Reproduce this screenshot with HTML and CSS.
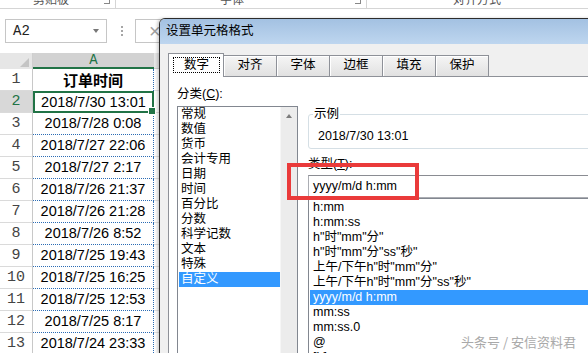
FILE: index.html
```html
<!doctype html>
<html>
    <head>
        <meta charset="utf-8">
        <title>设置单元格格式</title>
        <link rel="stylesheet" href="styles.css">
    </head>
    <body>
        <div class="ribbon">
            <div class="group group-clip"><span class="group-label">剪贴板</span><span class="launcher"></span></div>
            <div class="group group-font"><span class="group-label">字体</span><span class="launcher"></span></div>
            <div class="group group-align"><span class="group-label">对齐方式</span></div>
        </div>

        <div class="formula-bar">
            <div class="name-box"><span>A2</span><span class="drop"></span></div>
            <div class="grip"><i></i><i></i><i></i></div>
            <div class="formula-box"><span class="cancel">&times;</span></div>
        </div>

        <div class="sheet">
            <div class="corner"><span class="select-all"></span></div>
            <div class="col-head sel">A</div>
            <div class="col-head"></div>

            <div class="rh">1</div><div class="c head">订单时间</div><div class="b"></div>
            <div class="rh sel">2</div><div class="c active">2018/7/30 13:01</div><div class="b"></div>
            <div class="rh">3</div><div class="c">2018/7/28 0:08</div><div class="b"></div>
            <div class="rh">4</div><div class="c">2018/7/27 22:06</div><div class="b"></div>
            <div class="rh">5</div><div class="c">2018/7/27 2:17</div><div class="b"></div>
            <div class="rh">6</div><div class="c">2018/7/26 21:37</div><div class="b"></div>
            <div class="rh">7</div><div class="c">2018/7/26 21:28</div><div class="b"></div>
            <div class="rh">8</div><div class="c">2018/7/26 8:52</div><div class="b"></div>
            <div class="rh">9</div><div class="c">2018/7/25 19:43</div><div class="b"></div>
            <div class="rh">10</div><div class="c">2018/7/25 16:25</div><div class="b"></div>
            <div class="rh">11</div><div class="c">2018/7/25 12:53</div><div class="b"></div>
            <div class="rh">12</div><div class="c">2018/7/25 8:17</div><div class="b"></div>
            <div class="rh">13</div><div class="c">2018/7/24 23:33</div><div class="b"></div>
        </div>

        <div class="dialog">
            <div class="dialog-title">设置单元格格式</div>
            <div class="dialog-body">
                <div class="tabs">
                    <div class="tab active"><span class="focus">数字</span></div>
                    <div class="tab">对齐</div>
                    <div class="tab">字体</div>
                    <div class="tab">边框</div>
                    <div class="tab">填充</div>
                    <div class="tab">保护</div>
                </div>
                <div class="panel">
                    <div class="cat-col">
                        <div class="label">分类(<u>C</u>):</div>
                        <div class="listbox">
                            <div class="items">
                                <div class="item">常规</div>
                                <div class="item">数值</div>
                                <div class="item">货币</div>
                                <div class="item">会计专用</div>
                                <div class="item">日期</div>
                                <div class="item">时间</div>
                                <div class="item">百分比</div>
                                <div class="item">分数</div>
                                <div class="item">科学记数</div>
                                <div class="item">文本</div>
                                <div class="item">特殊</div>
                                <div class="item sel">自定义</div>
                            </div>
                            <div class="scrollbar"><span class="arrow-up"></span></div>
                        </div>
                    </div>
                    <div class="fmt-col">
                        <fieldset class="sample">
                            <legend>示例</legend>
                            <div class="sample-text">2018/7/30 13:01</div>
                        </fieldset>
                        <div class="label type-label">类型(<u>T</u>):</div>
                        <div class="type-input">yyyy/m/d h:mm</div>
                        <div class="type-list">
                            <div class="item">h:mm</div>
                            <div class="item">h:mm:ss</div>
                            <div class="item">h"时"mm"分"</div>
                            <div class="item">h"时"mm"分"ss"秒"</div>
                            <div class="item">上午/下午h"时"mm"分"</div>
                            <div class="item">上午/下午h"时"mm"分"ss"秒"</div>
                            <div class="item sel">yyyy/m/d h:mm</div>
                            <div class="item">mm:ss</div>
                            <div class="item">mm:ss.0</div>
                            <div class="item">@</div>
                            <div class="item">[h]:mm:ss</div>
                        </div>
                    </div>
                </div>
            </div>
        </div>

        <div class="mark-box"></div>
        <div class="watermark">头条号 / 安信资料君</div>
    </body>
</html>
```

FILE: styles.css
```css
* {
    box-sizing: border-box;
}
body {
    margin: 0;
    width: 588px;
    height: 353px;
    overflow: hidden;
    position: relative;
    background: #fff;
    font-family: "Liberation Sans", "Noto Sans CJK SC", sans-serif;
    color: #000;
}

/* ribbon, only its bottom edge is in the shot */
.ribbon {
    display: flex;
    height: 9px;
    border-bottom: 1px solid #d5d5d5;
    overflow: hidden;
}
.group {
    display: flex;
    height: 8px;
    border-right: 1px solid #d5d5d5;
}
.group-clip {
    width: 116px;
    padding-left: 33px;
}
.group-font {
    width: 251px;
    padding-left: 104px;
}
.group-align {
    flex: 1;
    padding-left: 86px;
    border-right: none;
}
.group-label {
    font-family: "Noto Sans CJK SC", sans-serif;
    font-size: 12px;
    line-height: 12px;
    margin-top: -7px;
    color: #555;
}
.launcher {
    margin-left: auto;
    margin-right: 5px;
    width: 6px;
    height: 4px;
    border-right: 1px solid #888;
    border-bottom: 1px solid #888;
}

/* name box + formula bar */
.formula-bar {
    display: flex;
    align-items: center;
    height: 24px;
    margin-top: 10px;
}
.name-box {
    width: 102px;
    height: 24px;
    margin-left: 5px;
    border: 1px solid #c6c6c6;
    display: flex;
    align-items: center;
    justify-content: space-between;
    padding: 0 7px;
    font-family: "Liberation Mono", monospace;
    font-size: 14px;
    color: #222;
}
.drop {
    border-left: 3.5px solid transparent;
    border-right: 3.5px solid transparent;
    border-top: 4px solid #777;
}
.grip {
    display: flex;
    flex-direction: column;
    gap: 2px;
    margin-left: 14px;
}
.grip i {
    width: 2px;
    height: 2px;
    background: #a6a6a6;
}
.formula-box {
    flex: 1;
    height: 24px;
    margin-left: 12px;
    border: 1px solid #c6c6c6;
    display: flex;
    align-items: center;
}
.cancel {
    margin-left: 13px;
    font-size: 20px;
    color: #a0a0a0;
}

/* worksheet */
.sheet {
    display: grid;
    grid-template-columns: 33px 121px 1fr;
    grid-template-rows: 16px;
    grid-auto-rows: 22px;
    margin-top: 10px;
}
.corner {
    background: #e6e6e6;
    border-right: 1px solid #cfcfcf;
    display: flex;
    justify-content: flex-end;
    align-items: flex-end;
    padding: 0 3px 2px 0;
}
.select-all {
    border-left: 9px solid transparent;
    border-bottom: 9px solid #c4c4c4;
}
.col-head {
    background: #e6e6e6;
    border-bottom: 1px solid #cfcfcf;
}
.col-head.sel {
    background: #d2d2d2;
    border-bottom: 2px solid #217346;
    color: #217346;
    text-align: center;
    font-family: "Liberation Mono", monospace;
    font-size: 14px;
    line-height: 15px;
}
.rh {
    border-right: 1px solid #c8c8c8;
    border-bottom: 1px solid #dadada;
    text-align: center;
    font-family: "Liberation Mono", monospace;
    font-size: 15px;
    line-height: 22px;
    color: #444;
}
.rh.sel {
    background: #d8d8d8;
    color: #217346;
}
.c {
    text-align: center;
    font-size: 14.5px;
    line-height: 21px;
    border-right: 1px dotted #2b6cb4;
    border-bottom: 1px dotted #2b6cb4;
}
.c.head {
    font-family: "Noto Sans CJK SC", sans-serif;
    font-weight: bold;
    font-size: 15px;
    border-bottom: none;
}
.c.active {
    position: relative;
    border: 2px solid #217346;
    line-height: 18px;
}
.c.active::after {
    content: "";
    position: absolute;
    right: -4px;
    bottom: -4px;
    width: 6px;
    height: 6px;
    background: #217346;
    border: 1px solid #fff;
}
.b {
    border-bottom: 1px solid #e1e1e1;
}

/* format cells dialog */
.dialog {
    position: absolute;
    left: 159px;
    top: 18px;
    width: 450px;
    height: 350px;
    border: 1px solid #2c2c2c;
    border-radius: 6px 6px 0 0;
    background: #f0f0f0;
    font-size: 12.5px;
    box-shadow: -2px 0 3px rgba(0, 0, 0, 0.18);
}
.dialog-title {
    height: 25px;
    line-height: 25px;
    padding-left: 6px;
    border-radius: 5px 5px 0 0;
    background: linear-gradient(#a3c1e2, #bed6ef);
}
.dialog-body {
    padding: 9px 0 0 8px;
}
.tabs {
    display: flex;
    align-items: flex-end;
    height: 23px;
}
.tab {
    width: 54px;
    height: 21px;
    margin-left: -1px;
    border: 1px solid #8e9198;
    border-bottom: none;
    background: linear-gradient(#f5f5f5, #e1e1e1);
    box-shadow: inset 1px 1px 0 #fff;
    text-align: center;
    line-height: 19px;
}
.tab.active {
    position: relative;
    z-index: 2;
    width: 56px;
    height: 24px;
    margin-left: 0;
    margin-bottom: -1px;
    padding: 3px 3px 4px 4px;
    background: #fff;
    box-shadow: none;
}
.focus {
    display: block;
    height: 16px;
    line-height: 14px;
    border: 1px dotted #000;
}
.panel {
    display: flex;
    gap: 10px;
    height: 290px;
    padding: 10px 0 0 8px;
    border: 1px solid #8e9198;
    background: #fff;
}
.label {
    line-height: 15px;
}
.label u {
    text-decoration: underline;
}
.cat-col {
    width: 121px;
    flex-shrink: 0;
}
.cat-col .label {
    margin-bottom: 4px;
}
.listbox {
    display: flex;
    height: 260px;
    border: 1px solid #828790;
}
.items {
    flex: 1;
}
.item {
    line-height: 15px;
    height: 15px;
    white-space: nowrap;
}
.items .item {
    margin-left: 1px;
    padding-left: 2px;
}
.item.sel {
    background: #3399ff;
    color: #fff;
}
.scrollbar {
    width: 17px;
    background: #ececec;
    border-left: 1px solid #f6f6f6;
    display: flex;
    justify-content: center;
    padding-top: 7px;
}
.arrow-up {
    width: 0;
    height: 0;
    border-left: 3.5px solid transparent;
    border-right: 3.5px solid transparent;
    border-bottom: 4px solid #7b7b7b;
}
.fmt-col {
    flex: 1;
}
.sample {
    margin: 20px 0 0 0;
    padding: 0 0 4px 4px;
    border: 1px solid #d5dfe5;
    border-radius: 3px;
}
.sample legend {
    padding: 0 1px;
    line-height: 15px;
}
.sample-text {
    padding: 7px 0 0 5px;
    line-height: 15px;
}
.type-label {
    margin-top: 8px;
}
.type-input {
    height: 23px;
    margin-top: 3px;
    padding-left: 4px;
    line-height: 21px;
    border: 1px solid #abadb3;
    border-top-color: #8a8c92;
}
.type-list {
    height: 200px;
    padding-top: 1px;
    border: 1px solid #828790;
}
.type-list .item {
    margin-left: 1px;
    padding-left: 3px;
}

/* red box drawn over the screenshot */
.mark-box {
    position: absolute;
    left: 287px;
    top: 163px;
    width: 132px;
    height: 37px;
    border: 4px solid #ea3a3a;
}
.watermark {
    position: absolute;
    left: 461px;
    top: 334px;
    font-family: "Noto Sans CJK SC", sans-serif;
    font-size: 13px;
    line-height: 16px;
    color: #a9a9a9;
    text-shadow: 0 0 2px #fff, 0 0 1px #fff;
}
```
